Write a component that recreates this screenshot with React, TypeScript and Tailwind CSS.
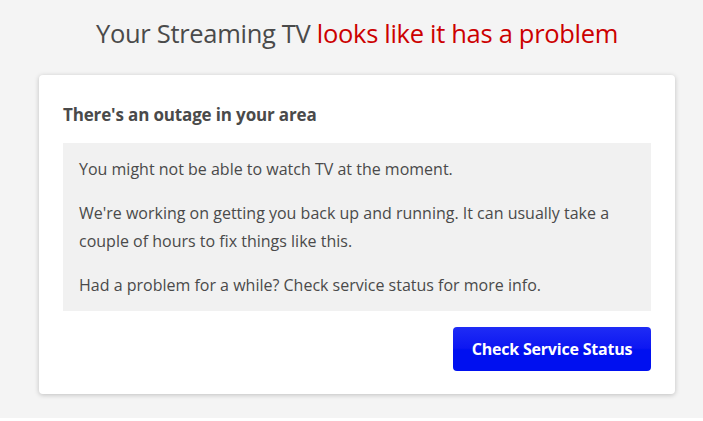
export default function App() {
  return (
    <div
      className="h-[418px] bg-[#f4f4f4] flex flex-col items-center pl-[11px]"
      style={{ fontFamily: '"Open Sans", "Liberation Sans", sans-serif' }}
    >
      <h1 className="mt-[14px] text-[25.5px] leading-[38px] text-[#4a4a4a] tracking-[-0.3px]">
        Your Streaming TV <span className="text-[#cc0000]">looks like it has a problem</span>
      </h1>

      <div className="mt-[23px] w-[636px] bg-white rounded-[4px] shadow-[0_1px_5px_rgba(0,0,0,0.22)] px-6 pt-[28px] pb-[23px]">
        <h2 className="text-[17px] leading-6 font-bold text-[#4a4a4a] tracking-[-0.15px]">
          There's an outage in your area
        </h2>

        <div className="mt-[16px] bg-[#f1f1f1] px-4 py-3 text-[16px] leading-[28px] text-[#4a4a4a]">
          <p>You might not be able to watch TV at the moment.</p>
          <p className="mt-4">
            We're working on getting you back up and running. It can usually take a couple of hours to fix things
            like this.
          </p>
          <p className="mt-4">Had a problem for a while? Check service status for more info.</p>
        </div>

        <div className="mt-4 flex justify-end">
          <button className="w-[198px] h-[44px] rounded-[4px] text-white font-bold text-[16px] tracking-[-0.2px] bg-[linear-gradient(to_bottom,#1f2cf5_0%,#0d17f2_48%,#0010f0_52%,#0010f0_100%)]">
            Check Service Status
          </button>
        </div>
      </div>
    </div>
  );
}
